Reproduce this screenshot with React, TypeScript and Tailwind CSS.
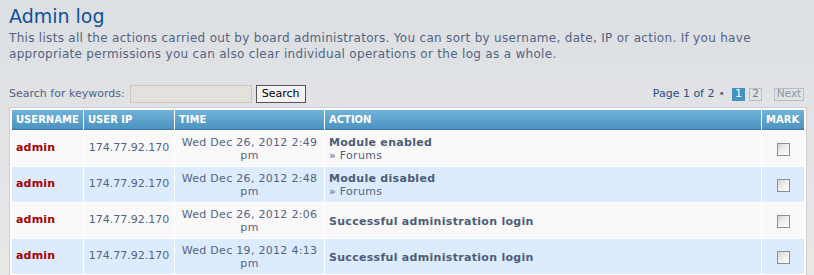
import React from 'react';

const font = { fontFamily: '"DejaVu Sans", Verdana, sans-serif' };

interface LogRow {
  time: string;
  action: string;
  sub?: string;
}

const rows: LogRow[] = [
  { time: 'Wed Dec 26, 2012 2:49', action: 'Module enabled', sub: 'Forums' },
  { time: 'Wed Dec 26, 2012 2:48', action: 'Module disabled', sub: 'Forums' },
  { time: 'Wed Dec 26, 2012 2:06', action: 'Successful administration login' },
  { time: 'Wed Dec 19, 2012 4:13', action: 'Successful administration login' },
];

function Checkbox() {
  return (
    <span className="inline-block w-[13px] h-[13px] border border-[#8e8e8e] bg-gradient-to-br from-[#d4d4d4] via-[#efefef] to-white align-middle" />
  );
}

const th = 'px-[4px] bg-gradient-to-b from-[#70b3da] to-[#4d93c1] border-b border-[#3a76a3]';

export default function App() {
  return (
    <div
      style={font}
      className="w-[814px] h-[275px] overflow-hidden bg-gradient-to-b from-[#dcdfe3] to-[#e8e8e9]"
    >
      {/* Heading */}
      <div className="pl-[9px] pt-[3px]">
        <h1 className="text-[19px] leading-[27px] text-[#115098]">Admin log</h1>
        <p className="text-[12px] leading-[16px] tracking-[0.3px] text-[#536482] pr-[30px]">
          This lists all the actions carried out by board administrators. You can sort by username, date, IP or action. If you have
          appropriate permissions you can also clear individual operations or the log as a whole.
        </p>
      </div>

      {/* Search + pagination */}
      <div className="flex items-center justify-between pl-[9px] pr-[10px] mt-[23px] h-[18px]">
        <div className="flex items-center">
          <span className="text-[11px] text-[#536482]">Search for keywords:</span>
          <span className="ml-[5px] w-[122px] h-[18px] border border-[#cbc7be] bg-[#e4e1dc]" />
          <span className="ml-[4px] w-[50px] h-[18px] border border-[#555] bg-[#f4f4f4] text-[11px] text-black flex items-center justify-center">
            Search
          </span>
        </div>
        <div className="flex items-center text-[11px]">
          <span className="text-[#2b5179]">Page 1 of 2</span>
          <span className="ml-[4px] text-[#536482]">•</span>
          <span className="ml-[7px] w-[13px] h-[13px] bg-[#4692bf] text-[10.5px] text-white flex items-center justify-center">1</span>
          <span className="ml-[4px] w-[13px] h-[13px] border border-[#b9bec4] text-[10.5px] text-[#6e7f94] flex items-center justify-center">2</span>
          <span className="ml-[12px] w-[30px] h-[13px] border border-[#b9bec4] text-[10.5px] text-[#8b97a5] flex items-center justify-center">Next</span>
        </div>
      </div>

      {/* Log table */}
      <div className="ml-[9px] mt-[4px] w-[798px] border border-[#cfcfcf] bg-white p-px">
        <table className="w-full table-fixed border-separate border-spacing-px bg-white">
          <colgroup>
            <col className="w-[71px]" />
            <col className="w-[90px]" />
            <col className="w-[149px]" />
            <col />
            <col className="w-[42px]" />
          </colgroup>
          <thead>
            <tr className="h-[20px] text-[10px] font-bold text-white uppercase text-left">
              <th className={th}>Username</th>
              <th className={th}>User IP</th>
              <th className={th}>Time</th>
              <th className={th}>Action</th>
              <th className={th}>Mark</th>
            </tr>
          </thead>
          <tbody>
            {rows.map((r, i) => (
              <tr key={i} className={i % 2 === 0 ? 'h-[35px] bg-[#f9f9f9]' : 'h-[35px] bg-[#dcebfe]'}>
                <td className="px-[4px] text-[11px] font-bold tracking-[0.2px] text-[#aa0000]">admin</td>
                <td className="px-[4px] text-[11px] text-[#536482] text-center">174.77.92.170</td>
                <td className="px-[2px] pt-[1px] text-[11px] leading-[13px] tracking-[0.3px] text-[#536482] text-center">
                  {r.time}
                  <br />
                  pm
                </td>
                <td className="px-[4px] pt-[1px] text-[11px] leading-[13px] tracking-[0.3px]">
                  <div className="font-bold text-[#4c5d77]">{r.action}</div>
                  {r.sub && <div className="text-[#536482]">» {r.sub}</div>}
                </td>
                <td className="text-center">
                  <Checkbox />
                </td>
              </tr>
            ))}
          </tbody>
        </table>
      </div>
    </div>
  );
}
